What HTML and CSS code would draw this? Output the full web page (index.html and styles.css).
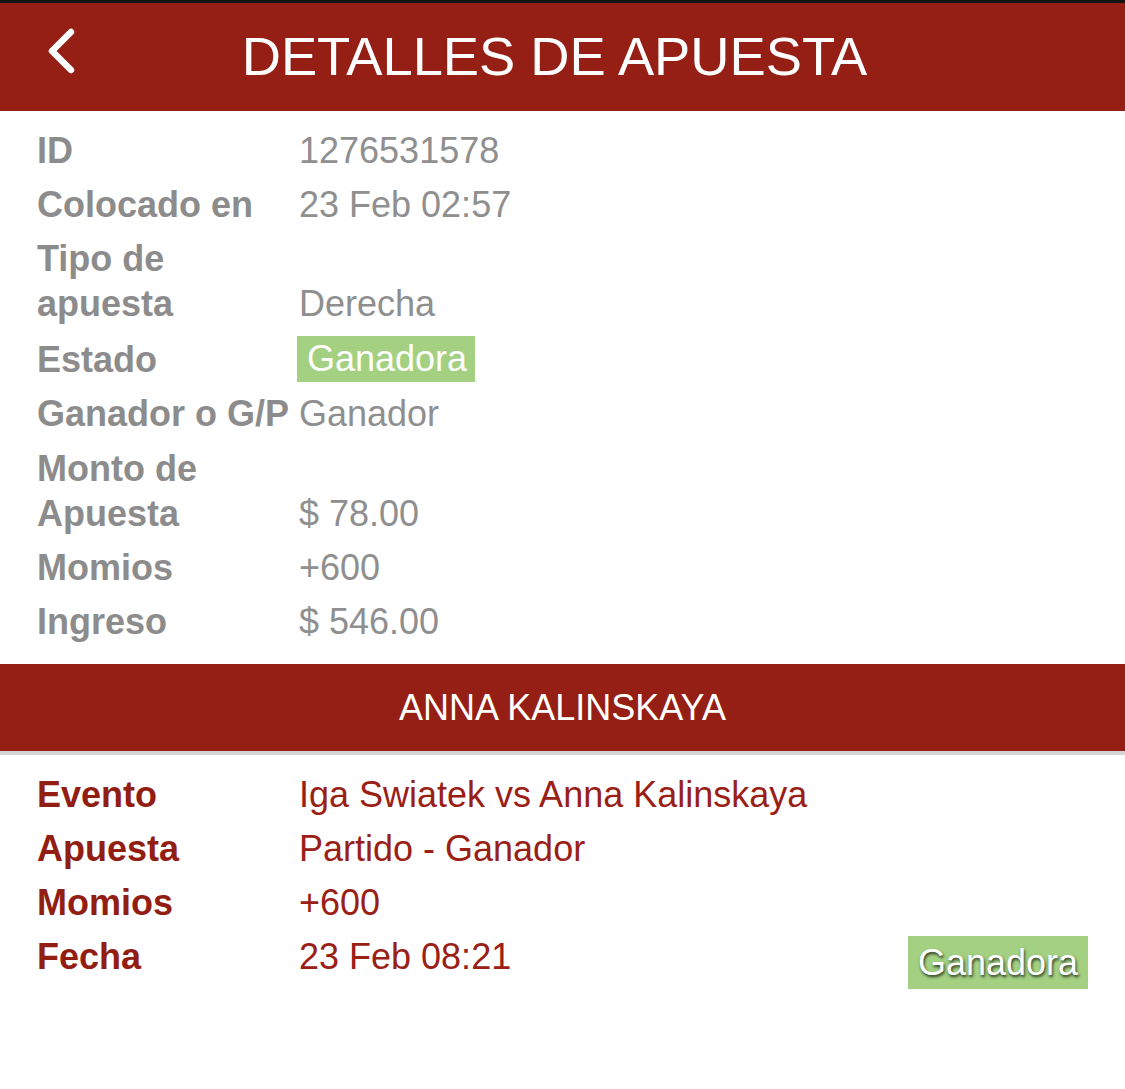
FILE: index.html
```
<!DOCTYPE html>
<html lang="es">
<head>
<meta charset="utf-8">
<title>Detalles de apuesta</title>
<link rel="stylesheet" href="styles.css">
</head>
<body>
<header class="topbar">
  <a class="back" href="#" aria-label="Volver">
    <svg width="30" height="46" viewBox="0 0 30 46"><path d="M24 4 L5 23 L24 42" fill="none" stroke="#fff" stroke-width="6.5" stroke-linecap="round" stroke-linejoin="round"/></svg>
  </a>
  <h1 class="title">DETALLES DE APUESTA</h1>
</header>

<section class="details">
  <div class="row"><div class="label">ID</div><div class="value">1276531578</div></div>
  <div class="row"><div class="label">Colocado en</div><div class="value">23 Feb 02:57</div></div>
  <div class="row"><div class="label">Tipo de apuesta</div><div class="value">Derecha</div></div>
  <div class="row"><div class="label">Estado</div><div class="value"><span class="badge">Ganadora</span></div></div>
  <div class="row"><div class="label">Ganador o G/P</div><div class="value">Ganador</div></div>
  <div class="row"><div class="label">Monto de Apuesta</div><div class="value">$ 78.00</div></div>
  <div class="row"><div class="label">Momios</div><div class="value">+600</div></div>
  <div class="row"><div class="label">Ingreso</div><div class="value">$ 546.00</div></div>
</section>

<div class="selection">ANNA KALINSKAYA</div>

<section class="details event">
  <div class="row"><div class="label">Evento</div><div class="value">Iga Swiatek vs Anna Kalinskaya</div></div>
  <div class="row"><div class="label">Apuesta</div><div class="value">Partido - Ganador</div></div>
  <div class="row"><div class="label">Momios</div><div class="value">+600</div></div>
  <div class="row"><div class="label">Fecha</div><div class="value split"><span>23 Feb 08:21</span><span class="badge badge-shadow">Ganadora</span></div></div>
</section>
</body>
</html>
```

FILE: styles.css
```
* { box-sizing: border-box; }

body {
  margin: 0;
  background: #ffffff;
  font-family: "Liberation Sans", Arial, sans-serif;
}

.topbar {
  position: relative;
  height: 111px;
  border-top: 3px solid #141414;
  background: #961f15;
  display: flex;
  align-items: center;
  justify-content: center;
}

.back {
  position: absolute;
  left: 47px;
  top: 25px;
  display: block;
  width: 30px;
  height: 46px;
}

.back svg { display: block; }

.title {
  margin: 0 16px 0 0;
  color: #ffffff;
  font-weight: normal;
  font-size: 54.3px;
  line-height: 60px;
  letter-spacing: 0;
}

.details {
  padding: 12px 37px 15px;
  font-size: 36px;
  line-height: 45px;
}

.row {
  display: grid;
  grid-template-columns: 262px 1fr;
  align-items: end;
  padding: 4.7px 0;
}

.label {
  font-weight: bold;
  color: #8c8c8c;
}

.value {
  color: #8f8f8f;
}

.badge {
  display: inline-block;
  background: #a3d081;
  color: #ffffff;
  height: 46px;
  line-height: 46px;
  padding: 0 8px 0 10px;
  margin-left: -2px;
  vertical-align: top;
}

.selection {
  height: 91px;
  background: #961f15;
  border-bottom: 4px solid #d4d4d4;
  color: #ffffff;
  font-size: 36px;
  display: flex;
  align-items: center;
  justify-content: center;
}

.event .row {
  padding: 4.5px 0;
  align-items: start;
}

.event .label { color: #921d13; }

.event .value { color: #9a2016; }

.split {
  display: flex;
  justify-content: space-between;
  align-items: flex-start;
}

.badge-shadow {
  height: 53px;
  line-height: 53px;
  margin-top: 2px;
  padding: 0 10px;
  text-shadow: 1px 2px 3px rgba(0, 0, 0, 0.75);
}
```
